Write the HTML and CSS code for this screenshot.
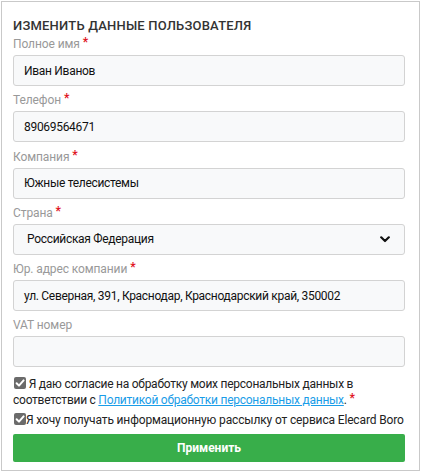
FILE: index.html
```html
<!DOCTYPE html>
<html lang="ru">
<head>
<meta charset="utf-8">
<link rel="stylesheet" href="styles.css">
</head>
<body>
<div class="card">
  <h2 class="title">ИЗМЕНИТЬ ДАННЫЕ ПОЛЬЗОВАТЕЛЯ</h2>
  <div class="field">
    <label class="label">Полное имя <span class="req">*</span></label>
    <div class="input">Иван Иванов</div>
  </div>
  <div class="field">
    <label class="label">Телефон <span class="req">*</span></label>
    <div class="input">89069564671</div>
  </div>
  <div class="field">
    <label class="label">Компания <span class="req">*</span></label>
    <div class="input">Южные телесистемы</div>
  </div>
  <div class="field">
    <label class="label">Страна <span class="req">*</span></label>
    <div class="input select"><span>Российская Федерация</span>
      <svg class="chev" width="10" height="7" viewBox="0 0 10 7"><path d="M1.2 1.3 L5 5 L8.8 1.3" fill="none" stroke="#111" stroke-width="2.2" stroke-linecap="round" stroke-linejoin="round"/></svg>
    </div>
  </div>
  <div class="field">
    <label class="label">Юр. адрес компании <span class="req">*</span></label>
    <div class="input">ул. Северная, 391, Краснодар, Краснодарский край, 350002</div>
  </div>
  <div class="field">
    <label class="label">VAT номер</label>
    <div class="input"></div>
  </div>
  <p class="check first"><span class="box"><svg width="12" height="12" viewBox="0 0 12 12"><path d="M2.6 6.2 L5 8.6 L9.6 3.4" fill="none" stroke="#fff" stroke-width="2" stroke-linecap="round" stroke-linejoin="round"/></svg></span> Я даю согласие на обработку моих персональных данных в соответствии с <a class="link" href="#">Политикой обработки персональных данных</a>. <span class="req">*</span></p>
  <p class="check second"><span class="box"><svg width="12" height="12" viewBox="0 0 12 12"><path d="M2.6 6.2 L5 8.6 L9.6 3.4" fill="none" stroke="#fff" stroke-width="2" stroke-linecap="round" stroke-linejoin="round"/></svg></span>Я хочу получать информационную рассылку от сервиса Elecard Boro</p>
  <div class="button">Применить</div>
</div>
</body>
</html>
```
FILE: styles.css
```css
html, body {
  margin: 0;
  padding: 0;
  background: #fff;
}
body {
  font-family: Roboto, "Noto Sans", sans-serif;
  font-size: 12px;
  letter-spacing: -0.3px;
  color: #222;
}
.card {
  margin: 1px 0 0 1px;
  width: 392px;
  height: 468px;
  border: 1px solid #c9c9c9;
  padding: 0 14px 0 11px;
  display: flex;
  flex-direction: column;
}
.title {
  margin: 15px 0 0 0;
  font-size: 13px;
  line-height: 17px;
  font-weight: 500;
  color: #333;
  letter-spacing: 0.2px;
}
.field {
  display: flex;
  flex-direction: column;
}
.label {
  font-size: 12px;
  line-height: 17px;
  height: 17px;
  color: #999;
  letter-spacing: -0.1px;
  margin-top: 2px;
  margin-bottom: 2px;
}
.req {
  color: #e0141e;
  font-weight: 700;
  vertical-align: 2px;
  font-size: 12px;
  line-height: 1;
}
.input {
  height: 29px;
  border: 1px solid #d3d3d3;
  border-radius: 3px;
  background: #f8f9fa;
  padding: 0 10px;
  display: flex;
  align-items: center;
  color: #111;
  margin-bottom: 4.25px;
  white-space: nowrap;
}
.select {
  padding-left: 13px;
  justify-content: space-between;
  padding-right: 14px;
}
.chev {
  display: block;
}
.check {
  margin: 0;
  line-height: 16px;
  color: #222;
  letter-spacing: -0.25px;
}
.check.first {
  margin-top: 4px;
}
.check.second {
  margin-top: 4px;
  white-space: nowrap;
  letter-spacing: -0.15px;
}
.box {
  display: inline-block;
  width: 12px;
  height: 12px;
  background: #6b6b6b;
  border-radius: 2px;
  vertical-align: -1px;
  margin-left: 1px;
}
.box svg {
  display: block;
}
.link {
  color: #1a9de8;
  text-decoration: underline;
}
.button {
  margin-top: 6px;
  height: 28px;
  background: #38ae4a;
  border-radius: 2px;
  color: #fff;
  font-weight: 700;
  letter-spacing: 0;
  display: flex;
  align-items: center;
  justify-content: center;
}
```
